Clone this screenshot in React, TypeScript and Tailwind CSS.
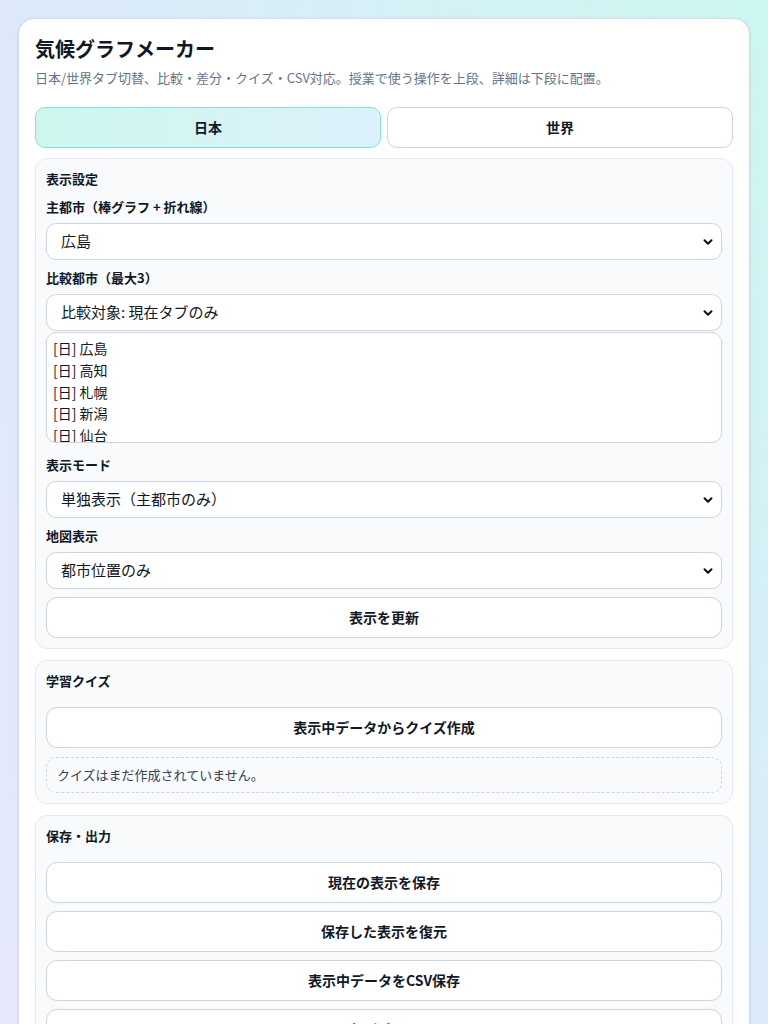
import React from "react";

const font = { fontFamily: '"Noto Sans CJK JP", "Noto Sans", sans-serif' };

function Chevron() {
  return (
    <svg
      className="pointer-events-none absolute right-[9px] top-1/2 -translate-y-1/2"
      width="10"
      height="10"
      viewBox="0 0 10 10"
    >
      <path d="M1.5 3.2 L5 6.7 L8.5 3.2" fill="none" stroke="#111" strokeWidth="2" strokeLinecap="round" strokeLinejoin="round" />
    </svg>
  );
}

function Select({ value }: { value: string }) {
  return (
    <div className="relative">
      <select
        defaultValue={value}
        className="block h-[37px] w-full appearance-none rounded-[10px] border border-[#cbd5e1] bg-white pl-[14px] text-[15px] text-[#111827] outline-none"
        style={font}
      >
        <option>{value}</option>
      </select>
      <Chevron />
    </div>
  );
}

function Btn({ children }: { children: React.ReactNode }) {
  return (
    <button
      className="h-[41px] w-full rounded-[11px] border border-[#cbd5e1] bg-white text-[14px] font-bold text-[#111827]"
      style={font}
    >
      {children}
    </button>
  );
}

function Label({ children }: { children: React.ReactNode }) {
  return <div className="text-[13px] font-bold leading-5 text-[#111827]">{children}</div>;
}

const cities = ["広島", "高知", "札幌", "新潟", "仙台"];

export default function App() {
  return (
    <div className="min-h-screen bg-linear-to-bl from-[#ccf7f0] via-[#dde9fb] to-[#e6e9fb] px-[18px] pt-[18px]" style={font}>
      <div className="rounded-[16px] border border-[#d4dbe6] bg-white p-4 shadow-sm">
        <h1 className="text-[20px] font-bold leading-7 text-[#111827]">気候グラフメーカー</h1>
        <p className="mt-[5px] text-[13px] leading-5 text-[#64748b]">
          日本/世界タブ切替、比較・差分・クイズ・CSV対応。授業で使う操作を上段、詳細は下段に配置。
        </p>

        {/* tabs */}
        <div className="mt-[19px] grid grid-cols-2 gap-[6px]">
          <button className="h-[41px] rounded-[10px] border border-[#7ee4d6] bg-linear-to-r from-[#cdf7ee] to-[#dcf1fb] text-[14px] font-bold text-[#111827]">
            日本
          </button>
          <button className="h-[41px] rounded-[10px] border border-[#cbd5e1] bg-white text-[14px] font-bold text-[#111827]">
            世界
          </button>
        </div>

        {/* 表示設定 */}
        <section className="mt-[10px] rounded-[12px] border border-[#e2e8f0] bg-[#f8fafc] p-[10px]">
          <Label>表示設定</Label>
          <div className="mt-2">
            <Label>主都市（棒グラフ + 折れ線）</Label>
            <div className="mt-[6px]">
              <Select value="広島" />
            </div>
          </div>
          <div className="mt-2">
            <Label>比較都市（最大3）</Label>
            <div className="mt-[6px]">
              <Select value="比較対象: 現在タブのみ" />
            </div>
            <div className="mt-px h-[111px] overflow-hidden rounded-[10px] border border-[#cbd5e1] bg-white px-[6px] pt-[4px]">
              {cities.map((c) => (
                <div key={c} className="h-[21.8px] text-[14px] leading-[22px] text-[#111827]">
                  [日] {c}
                </div>
              ))}
            </div>
          </div>
          <div className="mt-3">
            <Label>表示モード</Label>
            <div className="mt-[6px]">
              <Select value="単独表示（主都市のみ）" />
            </div>
          </div>
          <div className="mt-2">
            <Label>地図表示</Label>
            <div className="mt-[6px]">
              <Select value="都市位置のみ" />
            </div>
          </div>
          <div className="mt-2">
            <Btn>表示を更新</Btn>
          </div>
        </section>

        {/* 学習クイズ */}
        <section className="mt-[11px] rounded-[12px] border border-[#e2e8f0] bg-[#f8fafc] p-[10px]">
          <Label>学習クイズ</Label>
          <div className="mt-4">
            <Btn>表示中データからクイズ作成</Btn>
          </div>
          <div className="mt-[9px] flex h-[36px] items-center rounded-[10px] border border-dashed border-[#cbd5e1] bg-[#f8fafc] px-[10px] text-[13px] text-[#334155]">
            クイズはまだ作成されていません。
          </div>
        </section>

        {/* 保存・出力 */}
        <section className="mt-[11px] rounded-[12px] border border-[#e2e8f0] bg-[#f8fafc] p-[10px]">
          <Label>保存・出力</Label>
          <div className="mt-4 flex flex-col gap-2">
            <Btn>現在の表示を保存</Btn>
            <Btn>保存した表示を復元</Btn>
            <Btn>表示中データをCSV保存</Btn>
            <Btn>印刷ビュー</Btn>
            <Btn>リセット</Btn>
          </div>
        </section>
      </div>
    </div>
  );
}
